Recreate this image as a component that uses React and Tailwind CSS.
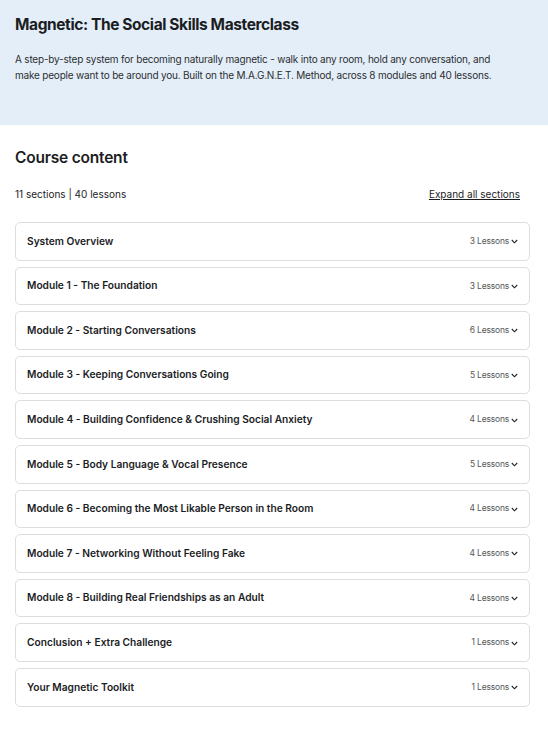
import React from 'react';

const sections = [
  { title: 'System Overview', count: 3 },
  { title: 'Module 1 - The Foundation', count: 3 },
  { title: 'Module 2 - Starting Conversations', count: 6 },
  { title: 'Module 3 - Keeping Conversations Going', count: 5 },
  { title: 'Module 4 - Building Confidence & Crushing Social Anxiety', count: 4 },
  { title: 'Module 5 - Body Language & Vocal Presence', count: 5 },
  { title: 'Module 6 - Becoming the Most Likable Person in the Room', count: 4 },
  { title: 'Module 7 - Networking Without Feeling Fake', count: 4 },
  { title: 'Module 8 - Building Real Friendships as an Adult', count: 4 },
  { title: 'Conclusion + Extra Challenge', count: 1 },
  { title: 'Your Magnetic Toolkit', count: 1 },
];

function Chevron() {
  return (
    <svg width="7" height="5" viewBox="0 0 7 5" className="ml-[2px] mt-[1px]">
      <path d="M0.8 1 L3.5 3.8 L6.2 1" fill="none" stroke="#222" strokeWidth="1.1" />
    </svg>
  );
}

export default function App() {
  return (
    <div className="min-h-[733px] bg-white text-[#1c1d1f]" style={{ fontFamily: 'Inter, "Open Sans", sans-serif' }}>
      <div className="bg-[#e3eef9] h-[125px] px-[15px] pt-[14px]">
        <h1 className="text-[15.5px] font-bold leading-[22px] tracking-[-0.4px]">Magnetic: The Social Skills Masterclass</h1>
        <p className="mt-[15px] text-[10px] leading-[16px] tracking-[-0.2px] text-[#2d2f31]">
          A step-by-step system for becoming naturally magnetic - walk into any room, hold any conversation, and
          <br />
          make people want to be around you. Built on the M.A.G.N.E.T. Method, across 8 modules and 40 lessons.
        </p>
      </div>

      <div className="px-[15px] pt-[22px] pb-[26px] w-[515px] box-content">
        <h2 className="text-[15.5px] font-semibold leading-[22px] tracking-[-0.2px]">Course content</h2>
        <div className="mt-[18px] flex justify-between items-center text-[10px] leading-[14px]">
          <span>11 sections | 40 lessons</span>
          <span className="underline mr-[10px]">Expand all sections</span>
        </div>
        <div className="mt-[21px] flex flex-col gap-[6px]">
          {sections.map((s) => (
            <div
              key={s.title}
              className="h-[38.6px] border border-[#dcdddf] rounded-[5px] flex items-center justify-between px-[11px]"
            >
              <span className="text-[10.2px] font-semibold">{s.title}</span>
              <span className="flex items-center text-[8.5px] text-[#55575a] tracking-[-0.2px]">
                {s.count} Lessons
                <Chevron />
              </span>
            </div>
          ))}
        </div>
      </div>
    </div>
  );
}
